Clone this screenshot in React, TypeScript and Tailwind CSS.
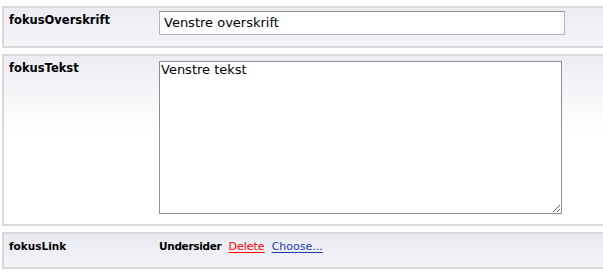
export default function App() {
  return (
    <main className="min-h-screen bg-white pt-[6px] font-['DejaVu_Sans',Verdana,sans-serif] text-black">
      {/* fokusOverskrift */}
      <section className="ml-[2px] flex h-[42px] border-y-2 border-l-2 border-[#d9d9d9] bg-gradient-to-b from-[#ececf3] to-[#f4f4f8]">
        <div className="w-[155px] shrink-0 pl-[5px] pt-[4px] text-[11.5px] font-bold">fokusOverskrift</div>
        <div className="pt-[2px]">
          <input
            defaultValue="Venstre overskrift"
            className="h-[24px] w-[406px] border border-[#b5b5b5] border-t-[#8f8f8f] bg-white px-[4px] text-[13px] outline-none"
          />
        </div>
      </section>

      {/* fokusTekst */}
      <section className="ml-[2px] mt-[6px] flex h-[172px] border-y-2 border-l-2 border-[#d9d9d9] bg-gradient-to-b from-[#ececf3] via-white via-[45%] to-white">
        <div className="w-[155px] shrink-0 pl-[5px] pt-[4px] text-[11.5px] font-bold">fokusTekst</div>
        <div className="pt-[5px]">
          <textarea
            defaultValue="Venstre tekst"
            className="block h-[153px] w-[403px] resize border border-[#8f8f8f] bg-white px-[1px] text-[13px] leading-[15px] outline-none"
          />
        </div>
      </section>

      {/* fokusLink */}
      <section className="ml-[2px] mt-[6px] flex h-[37px] items-start border-y-2 border-l-2 border-[#d9d9d9] bg-gradient-to-b from-[#eaeaf2] to-[#f3f3f8] pt-[5px]">
        <div className="w-[155px] shrink-0 pl-[5px] text-[10.5px] font-bold">fokusLink</div>
        <div className="flex items-baseline gap-[7px] text-[11px]">
          <span className="text-[10.5px] font-bold tracking-[-0.3px]">Undersider</span>
          <a href="#" className="text-[#ff0000] underline underline-offset-2">Delete</a>
          <a href="#" className="text-[#1a3ab4] underline underline-offset-2">Choose...</a>
        </div>
      </section>
    </main>
  );
}
